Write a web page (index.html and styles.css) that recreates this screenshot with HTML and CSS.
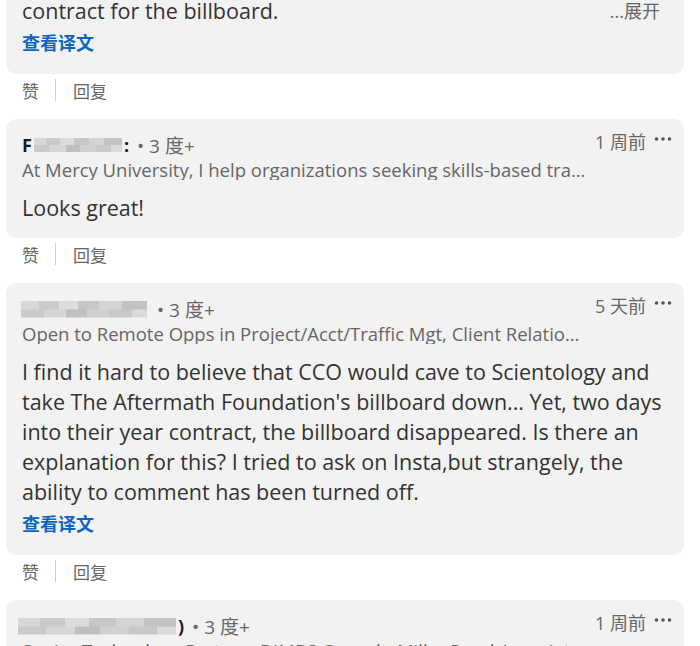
FILE: index.html
```html
<!DOCTYPE html>
<html lang="zh">
<head>
  <meta charset="UTF-8" />
  <meta name="viewport" content="width=device-width, initial-scale=1.0" />
  <title>Comments</title>
  <link rel="stylesheet" href="styles.css">
</head>
<body>
  <div class="feed">

    <div class="card card-first">
      <div class="clamp">
        <p class="body">I heard they ended the year-long<br>contract for the billboard.</p>
        <span class="more">...展开</span>
      </div>
      <a class="translate" href="#">查看译文</a>
    </div>
    <div class="actions">
      <span>赞</span><i class="sep"></i><span>回复</span>
    </div>

    <div class="card">
      <div class="card-head">
        <div class="who">
          <div class="name-row">
            <span class="name">F</span><span class="blur blur-a"></span><span class="name">:</span>
            <span class="degree">• 3 度+</span>
          </div>
          <div class="headline">At Mercy University, I help organizations seeking skills-based training and workforce development programs</div>
        </div>
        <div class="meta">
          <span class="time">1 周前</span>
          <svg class="dots" width="18" height="6" viewBox="0 0 18 6"><circle cx="2.5" cy="3" r="1.8"/><circle cx="9" cy="3" r="1.8"/><circle cx="15.5" cy="3" r="1.8"/></svg>
        </div>
      </div>
      <p class="body">Looks great!</p>
    </div>
    <div class="actions">
      <span>赞</span><i class="sep"></i><span>回复</span>
    </div>

    <div class="card">
      <div class="card-head">
        <div class="who">
          <div class="name-row">
            <span class="blur blur-b"></span>
            <span class="degree">• 3 度+</span>
          </div>
          <div class="headline">Open to Remote Opps in Project/Acct/Traffic Mgt, Client Relations, Marketing Operations</div>
        </div>
        <div class="meta">
          <span class="time">5 天前</span>
          <svg class="dots" width="18" height="6" viewBox="0 0 18 6"><circle cx="2.5" cy="3" r="1.8"/><circle cx="9" cy="3" r="1.8"/><circle cx="15.5" cy="3" r="1.8"/></svg>
        </div>
      </div>
      <p class="body">I find it hard to believe that CCO would cave to Scientology and take The Aftermath Foundation's billboard down... Yet, two days into their year contract, the billboard disappeared. Is there an explanation for this? I tried to ask on Insta,but strangely, the ability to comment has been turned off.</p>
      <a class="translate" href="#">查看译文</a>
    </div>
    <div class="actions">
      <span>赞</span><i class="sep"></i><span>回复</span>
    </div>

    <div class="card">
      <div class="card-head">
        <div class="who">
          <div class="name-row">
            <span class="blur blur-c"></span><span class="name">)</span>
            <span class="degree">• 3 度+</span>
          </div>
          <div class="headline">Senior Technology Partner, DIMBS Consult, Miller Road Associates</div>
        </div>
        <div class="meta">
          <span class="time">1 周前</span>
          <svg class="dots" width="18" height="6" viewBox="0 0 18 6"><circle cx="2.5" cy="3" r="1.8"/><circle cx="9" cy="3" r="1.8"/><circle cx="15.5" cy="3" r="1.8"/></svg>
        </div>
      </div>
      <p class="body">Thank you for sharing this.</p>
    </div>

  </div>
</body>
</html>
```

FILE: styles.css
```css
body {
  margin: 0;
  background: #fff;
  font-family: "Open Sans", "Noto Sans CJK SC", sans-serif;
  color: #333;
  overflow: hidden;
}

.feed {
  padding: 0 16px 0 6px;
}

.card {
  background: #f2f2f2;
  border-radius: 10px;
  padding: 12px 12px 15px 16px;
}

.card-first {
  margin-top: -49px;
  padding-top: 15px;
}

.card-head {
  display: flex;
  align-items: flex-start;
}

.who {
  flex: 1;
  min-width: 0;
  padding-top: 4px;
}

.name-row {
  display: flex;
  align-items: center;
  height: 20px;
  font-size: 19px;
}

.name {
  font-weight: 700;
  color: #191919;
  font-size: 18px;
}

.degree {
  color: #666;
  margin-left: 8px;
}

.blur {
  display: inline-block;
  height: 14px;
  margin: 0 2px;
  background-image:
    linear-gradient(to right, #d8d8d8 0 14%, #cacaca 14% 30%, #dcdcdc 30% 45%, #c6c6c6 45% 62%, #d4d4d4 62% 80%, #c2c2c2 80% 100%),
    linear-gradient(to right, #cacaca 0 18%, #d6d6d6 18% 36%, #c0c0c0 36% 52%, #d0d0d0 52% 70%, #c8c8c8 70% 88%, #dadada 88% 100%);
  background-size: 100% 50%;
  background-position: top, bottom;
  background-repeat: no-repeat;
}

.blur-a {
  width: 88px;
}

.blur-b {
  width: 126px;
  height: 17px;
  margin-left: -1px;
}

.blur-c {
  width: 158px;
  height: 17px;
  margin-left: -4px;
}

.headline {
  margin-top: 5px;
  font-size: 18.5px;
  line-height: 20px;
  color: #666;
  white-space: nowrap;
  overflow: hidden;
  text-overflow: ellipsis;
}

.meta {
  display: flex;
  align-items: center;
  gap: 8px;
  height: 20px;
  padding-left: 6px;
  color: #666;
  font-size: 18px;
}

.dots {
  fill: #555;
  margin-top: -5px;
}

.body {
  margin: 13px 0 0;
  font-size: 21.5px;
  line-height: 30px;
  color: #333;
}

.clamp {
  display: flex;
  justify-content: space-between;
  align-items: flex-end;
}

.clamp .body {
  margin: 0;
}

.more {
  font-size: 18px;
  line-height: 30px;
  color: #666;
  margin-right: 12px;
}

.translate {
  display: block;
  margin-top: 5px;
  margin-bottom: 4px;
  font-size: 18px;
  line-height: 24px;
  font-weight: 700;
  color: #0a66c2;
  text-decoration: none;
}

.actions {
  display: flex;
  align-items: center;
  height: 32px;
  margin-bottom: 13px;
  padding-left: 16px;
  font-size: 17px;
  color: #666;
}

.sep {
  width: 1px;
  height: 22px;
  background: #cfcfcf;
  margin: 0 17px 0 16px;
}
```
